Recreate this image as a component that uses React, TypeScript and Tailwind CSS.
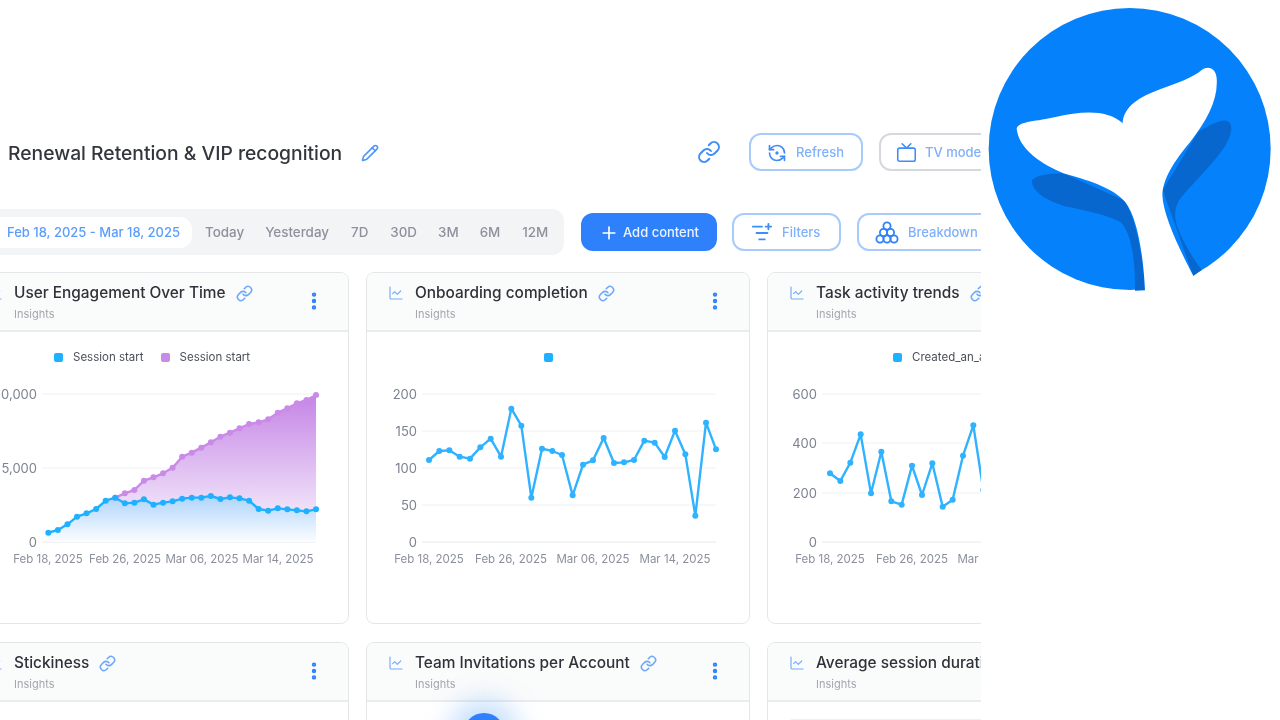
import React from "react";
import { ChartLine, EllipsisVertical, Link, ListFilterPlus, Pencil, Plus, RefreshCcwDot, Tv } from "lucide-react";

// chart points were read off a 3x crop, toPts maps them back to page pixels
type Pt = [number, number];

const toPts = (ox: number, xs: number[], ys: number[]): Pt[] =>
  xs.map((x, i) => [ox + x / 3, 340 + ys[i] / 3]);

const line = (pts: Pt[]) => pts.map((p) => p.join(",")).join(" ");

const blueXs = Array.from({ length: 29 }, (_, i) => 145 + (i * (948 - 145)) / 28);
const blueYs = [578, 570, 553, 530, 520, 507, 482, 473, 490, 488, 478, 494, 488, 484, 476, 473, 473, 468, 477, 472, 475, 482, 507, 512, 505, 508, 511, 514, 508];
const purpleYs = [473, 460, 450, 422, 412, 400, 383, 350, 338, 323, 307, 290, 278, 265, 252, 247, 238, 218, 205, 190, 180, 165];

const sessionBlue = toPts(0, blueXs, blueYs);
const sessionPurple = toPts(0, blueXs.slice(7), purpleYs);

const onboarding = toPts(
  370,
  [177, 208, 238, 269, 300, 331, 362, 393, 424, 454, 484, 516, 547, 576, 608, 639, 669, 701, 732, 762, 792, 823, 854, 884, 915, 946, 976, 1008, 1038],
  [360, 333, 331, 350, 356, 322, 296, 350, 206, 257, 473, 326, 333, 345, 466, 374, 361, 294, 369, 367, 360, 302, 308, 351, 272, 343, 527, 248, 328],
);

const tasks = toPts(
  770,
  [180, 211, 241, 272, 303, 334, 364, 395, 426, 456, 487, 518, 548, 579, 610, 640, 671],
  [400, 423, 368, 283, 460, 335, 484, 494, 377, 465, 370, 500, 479, 347, 256, 450, 400],
);

const BASE = 542;

const Axis = ({ x1, x2, ticks }: { x1: number; x2: number; ticks: [string, number][] }) => (
  <g>
    {ticks.map(([label, y]) => (
      <g key={label}>
        <line x1={x1} x2={x2} y1={y} y2={y} stroke={y === BASE ? "#e6e8ec" : "#eff0f3"} strokeWidth="1" />
        <text x={x1 - 5} y={y + 4.5} textAnchor="end" fontSize="13" fill="#7d8290">
          {label}
        </text>
      </g>
    ))}
  </g>
);

const Dates = ({ items }: { items: [string, number][] }) => (
  <g>
    {items.map(([label, x]) => (
      <text key={label} x={x} y={563} textAnchor="middle" fontSize="11.5" fill="#8b909c">
        {label}
      </text>
    ))}
  </g>
);

const Series = ({ pts, color }: { pts: Pt[]; color: string }) => (
  <g>
    <polyline points={line(pts)} fill="none" stroke={color} strokeWidth="2.4" strokeLinejoin="round" />
    {pts.map((p, i) => (
      <circle key={i} cx={p[0]} cy={p[1]} r="3" fill={color} />
    ))}
  </g>
);

const area = (pts: Pt[]) =>
  `${pts[0][0]},${BASE} ${line(pts)} ${pts[pts.length - 1][0]},${BASE}`;

const EngagementChart = () => (
  <svg viewBox="-34 368 382 254" className="block w-[382px] h-[254px]">
    <defs>
      <linearGradient id="purpleFill" gradientUnits="userSpaceOnUse" x1="0" y1="394" x2="0" y2="512">
        <stop offset="0" stopColor="#c584e6" />
        <stop offset="1" stopColor="#f0e3f9" />
      </linearGradient>
      <linearGradient id="blueFill" gradientUnits="userSpaceOnUse" x1="0" y1="498" x2="0" y2="542">
        <stop offset="0" stopColor="#b2d6fb" />
        <stop offset="1" stopColor="#fbfdff" />
      </linearGradient>
    </defs>
    <Axis x1={42} x2={316} ticks={[["10,000", 394], ["5,000", 468], ["0", 542]]} />
    <polygon points={area(sessionPurple)} fill="url(#purpleFill)" />
    <polygon points={area(sessionBlue)} fill="url(#blueFill)" />
    <Series pts={sessionPurple} color="#c98ae8" />
    <Series pts={sessionBlue} color="#1fb0ff" />
    <Dates items={[["Feb 18, 2025", 48], ["Feb 26, 2025", 125], ["Mar 06, 2025", 202], ["Mar 14, 2025", 278]]} />
  </svg>
);

const OnboardingChart = () => (
  <svg viewBox="367 368 382 254" className="block w-[382px] h-[254px]">
    <Axis x1={422} x2={716} ticks={[["200", 394], ["150", 431], ["100", 468], ["50", 505], ["0", 542]]} />
    <Series pts={onboarding} color="#2fb2ff" />
    <Dates items={[["Feb 18, 2025", 429], ["Feb 26, 2025", 511], ["Mar 06, 2025", 593], ["Mar 14, 2025", 675]]} />
  </svg>
);

const TasksChart = () => (
  <svg viewBox="768 368 382 254" className="block w-[382px] h-[254px]">
    <Axis x1={822} x2={1117} ticks={[["600", 394], ["400", 443], ["200", 493], ["0", 542]]} />
    <Series pts={tasks} color="#2fb2ff" />
    <Dates items={[["Feb 18, 2025", 830], ["Feb 26, 2025", 912], ["Mar 06, 2025", 994]]} />
  </svg>
);

const Legend = ({ labels, className }: { labels: { text: string; color: string }[]; className: string }) => (
  <div className={`flex items-center h-[36px] pt-[15px] gap-[17px] ${className}`}>
    {labels.map((l, i) => (
      <div key={i} className="flex items-center gap-[10px]">
        <span className="w-[9px] h-[9px] rounded-[2px]" style={{ backgroundColor: l.color }} />
        {l.text && <span className="text-[11.5px] text-[#4b4f58]">{l.text}</span>}
      </div>
    ))}
  </div>
);

const Card = ({ title, children }: { title: string; children?: React.ReactNode }) => (
  <div className="h-full border border-[#e4e6e9] rounded-lg overflow-hidden bg-white">
    <div className="relative flex h-[59px] bg-[#fafbfb] border-b-2 border-[#eaecee] pl-[21px] pt-[10px]">
      <ChartLine size={16} strokeWidth={1.8} className="text-[#78aefb] mt-[2px] shrink-0" />
      <div className="ml-[11px]">
        <div className="flex items-center gap-[10px]">
          <span className="text-[15.4px] leading-5 font-medium text-[#2f3238] whitespace-nowrap">{title}</span>
          <Link size={17} strokeWidth={2.2} className="text-[#6ea8fb] shrink-0" />
        </div>
        <div className="text-[11px] leading-4 mt-[3px] text-[#a3a7b0]">Insights</div>
      </div>
      <EllipsisVertical size={22} strokeWidth={2.8} className="absolute left-[337px] top-[17px] text-[#2f80fb]" />
    </div>
    {children}
  </div>
);

const OutlineButton = ({ icon, label, className }: { icon: React.ReactNode; label: string; className: string }) => (
  <button className={`flex items-center h-[38px] pt-[1px] rounded-xl border-2 bg-white text-[13px] font-medium text-[#7fb0fb] whitespace-nowrap ${className}`}>
    {icon}
    {label}
  </button>
);

const ClusterIcon = () => (
  <svg width="26" height="26" viewBox="0 0 26 26" fill="none" stroke="#2f80fb" strokeWidth="1.8" className="mr-[8px] shrink-0">
    <circle cx="13" cy="6" r="3.6" />
    <circle cx="9.5" cy="12.5" r="3.6" />
    <circle cx="16.5" cy="12.5" r="3.6" />
    <circle cx="6" cy="19" r="3.6" />
    <circle cx="13" cy="19" r="3.6" />
    <circle cx="20" cy="19" r="3.6" />
  </svg>
);

const WhaleLogo = () => (
  <svg viewBox="0 0 900 900" className="absolute left-[980px] top-0 w-[300px] h-[300px]">
    <circle cx="449" cy="447" r="423" fill="#0582fb" />
    <path
      d="M155 545 C158 528 200 520 250 520 L430 600 C460 630 490 760 495 871 L465 872 C465 790 458 710 425 670 C400 650 330 635 270 622 C210 608 160 580 155 545 Z"
      fill="#0767cf"
    />
    <path
      d="M655 395 C690 375 720 360 738 362 C760 368 758 395 740 430 C715 475 650 540 605 590 C585 615 580 640 592 680 C610 730 640 775 665 810 L640 828 L548 570 Z"
      fill="#0767cf"
    />
    <path
      d="M110 385 C118 362 170 365 230 350 C300 335 380 325 428 370 C430 320 480 290 540 268 C590 250 640 232 665 210 C685 195 708 205 710 235 C715 300 680 360 635 420 C595 470 550 525 547 585 C550 650 600 750 640 828 A423 423 0 0 1 495 871 C490 760 470 640 430 600 C390 560 320 540 250 520 C190 495 115 450 110 385 Z"
      fill="#ffffff"
    />
  </svg>
);

export default function App() {
  return (
    <div className="relative w-[1280px] h-[720px] overflow-hidden bg-white font-['Inter',sans-serif]">
      <div className="w-[981px] h-full overflow-hidden">
        <div className="blur-[0.7px] pt-[133px]">
          <div className="flex items-center justify-between w-[994px] h-[38px] pl-[8px]">
            <div className="flex items-center gap-[19px] pt-[2px]">
              <h1 className="text-[19.3px] font-medium text-[#33363c] whitespace-nowrap">Renewal Retention &amp; VIP recognition</h1>
              <Pencil size={18} strokeWidth={2} className="text-[#4d94fb]" />
            </div>
            <div className="flex items-center">
              <Link size={24} strokeWidth={2} className="text-[#3f8df8] mr-[28px]" />
              <OutlineButton
                icon={<RefreshCcwDot size={20} strokeWidth={2} className="text-[#3f8df8] mr-[9px]" />}
                label="Refresh"
                className="w-[114px] pl-4 border-[#a9cbfb] mr-[16px]"
              />
              <OutlineButton
                icon={<Tv size={21} strokeWidth={1.8} className="text-[#3f8df8] mr-[8px]" />}
                label="TV mode"
                className="w-[115px] pl-[15px] border-[#d5d8dd]"
              />
            </div>
          </div>

          <div className="flex items-center w-[1010px] h-[46px] mt-[38px]">
            <div className="flex items-center shrink-0 h-[46px] w-[574px] -ml-[10px] pt-[1px] rounded-xl bg-[#f3f4f6] pl-[10px] text-[13.4px] font-medium text-[#8d919c] whitespace-nowrap">
              <span className="flex items-center h-[31px] w-[192px] pl-[7px] rounded-r-xl bg-white text-[#5a9dfb] text-[13px]">
                Feb 18, 2025 - Mar 18, 2025
              </span>
              <span className="ml-[13px]">Today</span>
              <span className="ml-[21px]">Yesterday</span>
              <span className="ml-[22px]">7D</span>
              <span className="ml-[22px]">30D</span>
              <span className="ml-[21px]">3M</span>
              <span className="ml-[21px]">6M</span>
              <span className="ml-[22px]">12M</span>
            </div>
            <button className="flex items-center justify-center gap-[4px] shrink-0 w-[136px] h-[38px] ml-[17px] pt-[1px] rounded-xl bg-[#2f80fb] text-[13px] font-medium text-[#eaf3ff] whitespace-nowrap">
              <Plus size={20} strokeWidth={2} className="text-white" />
              Add content
            </button>
            <OutlineButton
              icon={<ListFilterPlus size={22} strokeWidth={2} className="text-[#3f8df8] mr-[9px]" />}
              label="Filters"
              className="w-[109px] shrink-0 pl-[17px] ml-[15px] border-[#a9cbfb]"
            />
            <OutlineButton
              icon={<ClusterIcon />}
              label="Breakdown"
              className="w-[150px] pl-[15px] ml-[16px] border-[#a9cbfb] shrink-0"
            />
          </div>

          <div className="grid grid-cols-[384px_384px_384px] gap-x-[17px] gap-y-[18px] -ml-[35px] mt-[17px] w-[1186px]">
            <div className="h-[352px]">
              <Card title="User Engagement Over Time">
                <Legend className="pl-[88px]" labels={[{ text: "Session start", color: "#1fb0ff" }, { text: "Session start", color: "#c98ae8" }]} />
                <EngagementChart />
              </Card>
            </div>
            <div className="h-[352px]">
              <Card title="Onboarding completion">
                <Legend className="pl-[177px]" labels={[{ text: "", color: "#1fb0ff" }]} />
                <OnboardingChart />
              </Card>
            </div>
            <div className="h-[352px]">
              <Card title="Task activity trends">
                <Legend className="pl-[125px]" labels={[{ text: "Created_an_account", color: "#1fb0ff" }]} />
                <TasksChart />
              </Card>
            </div>
            <Card title="Stickiness">
              <div className="h-[120px]" />
            </Card>
            <Card title="Team Invitations per Account">
              <div className="h-[120px]" />
            </Card>
            <Card title="Average session duration">
              <div className="pt-[17px] pl-[23px]">
                <div className="h-[100px] border-t border-[#eff0f2]" />
              </div>
            </Card>
          </div>
        </div>
      </div>

      <div className="absolute left-[463px] top-[713px] w-[42px] h-[42px] rounded-full bg-[#2f80fb] shadow-[0_0_26px_14px_rgba(96,165,250,0.35)]" />
      <WhaleLogo />
    </div>
  );
}
